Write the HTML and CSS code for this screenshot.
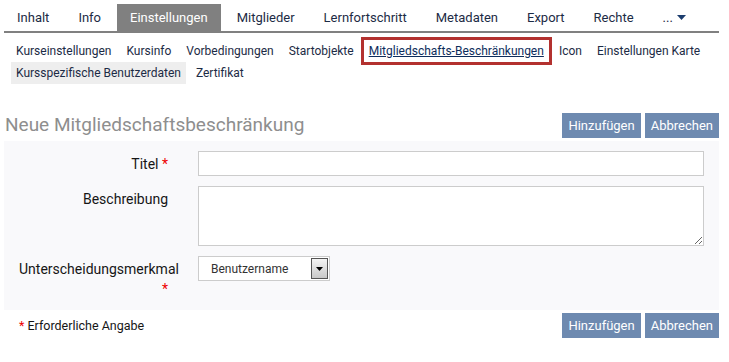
FILE: index.html
```html
<!DOCTYPE html>
<html lang="de">

<head>
    <meta charset="UTF-8">
    <meta name="viewport" content="width=device-width, initial-scale=1.0">
    <title>Neue Mitgliedschaftsbeschränkung</title>
    <link rel="stylesheet" href="styles.css">
</head>

<body>
    <div class="page">
        <ul class="tabs">
            <li><a href="#">Inhalt</a></li>
            <li><a href="#">Info</a></li>
            <li class="active"><a href="#">Einstellungen</a></li>
            <li><a href="#">Mitglieder</a></li>
            <li><a href="#">Lernfortschritt</a></li>
            <li><a href="#">Metadaten</a></li>
            <li><a href="#">Export</a></li>
            <li><a href="#">Rechte</a></li>
            <li class="more"><a href="#">...
                    <svg class="caret" width="9" height="5" viewBox="0 0 9 5"><path d="M0 0H9L4.5 5Z" /></svg></a>
            </li>
        </ul>

        <ul class="subtabs">
            <li><a href="#">Kurseinstellungen</a></li>
            <li><a href="#">Kursinfo</a></li>
            <li><a href="#">Vorbedingungen</a></li>
            <li><a href="#">Startobjekte</a></li>
            <li class="highlight"><a href="#">Mitgliedschafts-Beschränkungen</a></li>
            <li><a href="#">Icon</a></li>
            <li><a href="#">Einstellungen Karte</a></li>
            <li class="selected"><a href="#">Kursspezifische Benutzerdaten</a></li>
            <li><a href="#">Zertifikat</a></li>
        </ul>

        <form class="form" action="#" method="post">
            <div class="form-head">
                <h2>Neue Mitgliedschaftsbeschränkung</h2>
                <div class="buttons">
                    <button type="submit" class="btn">Hinzufügen</button>
                    <button type="button" class="btn">Abbrechen</button>
                </div>
            </div>

            <div class="form-body">
                <div class="row">
                    <label class="label" for="title">Titel <span class="req">*</span></label>
                    <div class="field"><input type="text" id="title" class="input"></div>
                </div>
                <div class="row">
                    <label class="label" for="desc">Beschreibung</label>
                    <div class="field"><textarea id="desc" class="textarea"></textarea></div>
                </div>
                <div class="row">
                    <label class="label" for="crit">Unterscheidungsmerkmal <span class="req">*</span></label>
                    <div class="field">
                        <div class="select-wrap">
                            <select id="crit" class="select">
                                <option>Benutzername</option>
                            </select>
                            <span class="select-btn"><svg width="7" height="4" viewBox="0 0 7 4"><path d="M0 0H7L3.5 4Z" /></svg></span>
                        </div>
                    </div>
                </div>
            </div>

            <div class="form-foot">
                <span class="required-note"><span class="req">*</span> Erforderliche Angabe</span>
                <div class="buttons">
                    <button type="submit" class="btn">Hinzufügen</button>
                    <button type="button" class="btn">Abbrechen</button>
                </div>
            </div>
        </form>
    </div>
</body>

</html>
```

FILE: styles.css
```css
body {
    margin: 0;
    font-family: Roboto, "Liberation Sans", Arial, sans-serif;
    color: #161616;
    background-color: #fff;
}

.page {
    padding: 4px 10px 0 4px;
}

/* Main tabs */
.tabs {
    display: flex;
    margin: 0;
    padding: 0;
    list-style: none;
    border-bottom: 2px solid #808080;
}

.tabs li {
    margin-right: 3px;
}

.tabs a {
    display: block;
    padding: 0 13px;
    line-height: 27px;
    font-size: 13px;
    color: #1c2b45;
    text-decoration: none;
}

.tabs .active a {
    background-color: #808080;
    color: #fff;
}

.tabs .caret {
    fill: #1c3d6e;
    margin-left: 1px;
    vertical-align: 2px;
}

/* Sub tabs */
.subtabs {
    display: flex;
    flex-wrap: wrap;
    margin: 7px 0 0;
    padding: 0 0 0 7px;
    list-style: none;
}

.subtabs li {
    margin-right: 5px;
}

.subtabs a {
    display: block;
    padding: 0 5px;
    line-height: 22px;
    font-size: 12px;
    color: #1c2b45;
    text-decoration: none;
}

.subtabs .selected a {
    background-color: #eeeeee;
}

.subtabs .highlight a {
    color: #0e2d5c;
    text-decoration: underline;
    outline: 3px solid #b3312f;
}

/* Form */
.form-head {
    display: flex;
    justify-content: space-between;
    align-items: flex-end;
    margin-top: 29px;
    margin-bottom: 3px;
}

.form-head h2 {
    margin: 0 0 2px 1px;
    font-size: 19px;
    font-weight: normal;
    color: #8e8e8e;
}

.buttons {
    display: flex;
    gap: 4px;
}

.btn {
    height: 25px;
    padding: 0 6px;
    border: 0;
    background-color: #6e8ab0;
    color: #fff;
    font-family: inherit;
    font-size: 13px;
}

.form-body {
    padding: 10px 15px 11px;
    background-color: #f9f9fb;
}

.row {
    display: flex;
    gap: 30px;
    margin-bottom: 10px;
}

.row:last-child {
    margin-bottom: 0;
}

.label {
    width: 149px;
    flex-shrink: 0;
    padding-top: 3px;
    text-align: right;
    font-size: 14px;
    line-height: 20px;
}

.req {
    color: #e00;
}

.field {
    flex: 1;
}

.input,
.textarea {
    display: block;
    width: 100%;
    box-sizing: border-box;
    border: 1px solid #cccccc;
    background-color: #fff;
    font-family: inherit;
}

.input {
    height: 25px;
}

.textarea {
    height: 60px;
}

.select-wrap {
    position: relative;
    width: 132px;
}

.select {
    display: block;
    width: 100%;
    height: 25px;
    padding: 0 0 0 12px;
    border: 1px solid #cccccc;
    background-color: #fff;
    appearance: none;
    -webkit-appearance: none;
    font-family: inherit;
    font-size: 12px;
    color: #333;
}

/* The dropdown button drawn over the select */
.select-btn {
    position: absolute;
    top: 2px;
    right: 2px;
    width: 15px;
    height: 19px;
    border: 1px solid #555;
    background: linear-gradient(#f4f4f4, #c8c8c8);
    display: flex;
    align-items: center;
    justify-content: center;
    pointer-events: none;
}

.select-btn svg {
    fill: #000;
}

.form-foot {
    display: flex;
    justify-content: space-between;
    align-items: flex-start;
    padding: 3px 0 0 15px;
}

.required-note {
    padding-top: 5px;
    font-size: 12.5px;
}
```
